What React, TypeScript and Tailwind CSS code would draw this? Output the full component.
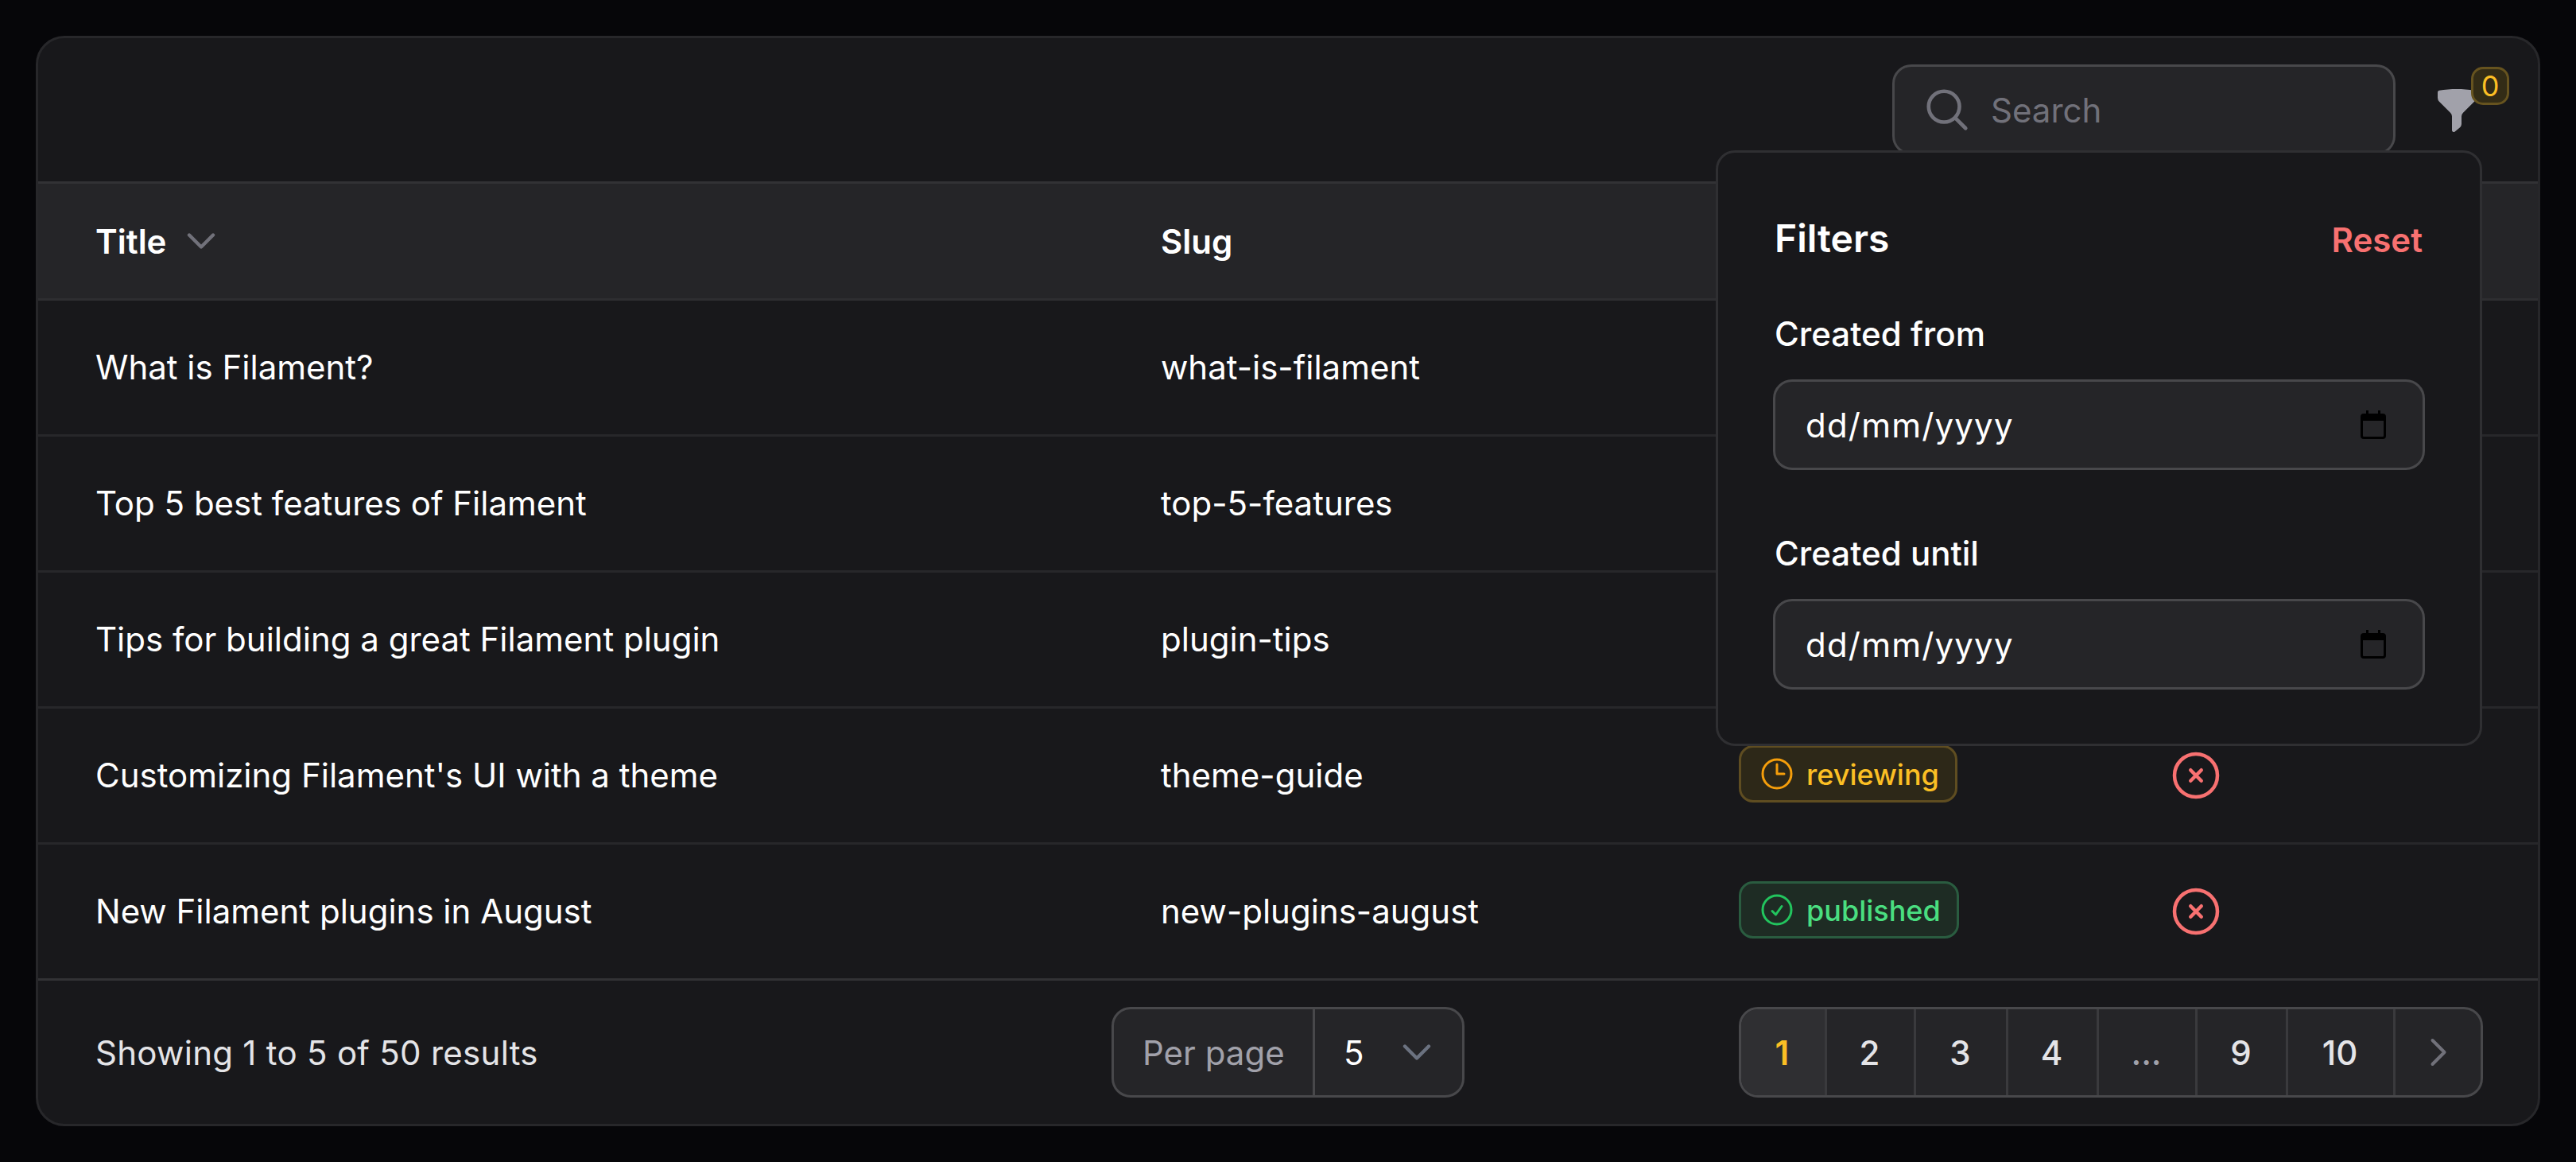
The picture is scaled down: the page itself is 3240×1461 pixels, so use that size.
import { ReactNode } from 'react';

const rows = [
  { title: 'What is Filament?', slug: 'what-is-filament' },
  { title: 'Top 5 best features of Filament', slug: 'top-5-features' },
  { title: 'Tips for building a great Filament plugin', slug: 'plugin-tips' },
  { title: "Customizing Filament's UI with a theme", slug: 'theme-guide', status: 'reviewing' },
  { title: 'New Filament plugins in August', slug: 'new-plugins-august', status: 'published' },
];

const pages = [
  { label: '1', w: 'w-[108px]', cls: 'bg-[#2f2f32] text-[#fbbf24] font-semibold' },
  { label: '2', w: 'w-[112px]', cls: 'text-[#e4e4e7] font-medium' },
  { label: '3', w: 'w-[116px]', cls: 'text-[#e4e4e7] font-medium' },
  { label: '4', w: 'w-[114px]', cls: 'text-[#e4e4e7] font-medium' },
  { label: '...', w: 'w-[124px]', cls: 'text-[#a1a1aa] font-medium' },
  { label: '9', w: 'w-[114px]', cls: 'text-[#e4e4e7] font-medium' },
  { label: '10', w: 'w-[135px]', cls: 'text-[#e4e4e7] font-medium' },
];

function Stroke({ d, size, width, className }: { d: string; size: number; width: number; className?: string }) {
  return (
    <svg width={size} height={size} viewBox="0 0 24 24" fill="none" stroke="currentColor" strokeWidth={width} strokeLinecap="round" strokeLinejoin="round" className={className}>
      <path d={d} />
    </svg>
  );
}

function Badge({ status }: { status: string }) {
  const reviewing = status === 'reviewing';
  return (
    <span className={`inline-flex h-[72px] items-center gap-[13px] rounded-[18px] border-[3px] pl-[21px] pr-[20px] text-[36px] font-medium ${reviewing ? 'border-[#5f4d21] bg-[#2d2818] text-[#fbbf24]' : 'border-[#2a5c40] bg-[#1e2c24] text-[#4ade80]'}`}>
      {reviewing ? (
        <Stroke size={48} width={1.5} className="text-[#f59e0b]" d="M12 6v6h4.5m4.5 0a9 9 0 1 1-18 0 9 9 0 0 1 18 0Z" />
      ) : (
        <Stroke size={48} width={1.5} className="text-[#22c55e]" d="M9 12.75 11.25 15 15 9.75M21 12a9 9 0 1 1-18 0 9 9 0 0 1 18 0Z" />
      )}
      <span className="pt-[2px]">{status}</span>
    </span>
  );
}

function DateField({ label, className }: { label: string; className?: string }) {
  return (
    <div className={className}>
      <div className="mb-[27px] pl-[2px] pt-[1px] text-[42px] leading-[60px] font-medium text-white">{label}</div>
      <div className="flex h-[114px] items-center justify-between rounded-[24px] border-[3px] border-[#48484b] bg-[#252528] pl-[38px] pr-[46px] text-[42px] tracking-[1.2px] text-white">
        <span>dd/mm/yyyy</span>
        <svg width="32" height="36" viewBox="0 0 32 36" className="text-black" fill="currentColor">
          <path d="M7 0h3v4h12V0h3v4h3a4 4 0 0 1 4 4v24a4 4 0 0 1-4 4H4a4 4 0 0 1-4-4V8a4 4 0 0 1 4-4h3V0Zm-4 13v19a1 1 0 0 0 1 1h24a1 1 0 0 0 1-1V13H3Z" />
        </svg>
      </div>
    </div>
  );
}

function Row({ children, border = true }: { children: ReactNode; border?: boolean }) {
  return (
    <div className={`grid grid-cols-[1340px_728px_572px_1fr] items-center text-[42px] text-white ${border ? 'h-[171px] border-b-[3px] border-[#27272a]' : 'h-[168px]'}`}>
      {children}
    </div>
  );
}

export default function App() {
  return (
    <div className="min-h-[1461px] bg-[#060609] p-[45px] font-['Inter',sans-serif]">
      <div className="relative h-[1371px] overflow-hidden rounded-[36px] border-[3px] border-[#27272a] bg-[#18181b]">
        {/* toolbar */}
        <div className="flex h-[183px] items-start justify-end border-b-[3px] border-[#323235] pr-[72px] pt-[33px]">
          <div className="flex h-[114px] w-[633px] items-center gap-[24px] rounded-[24px] border-[3px] border-[#48484b] bg-[#252528] pl-[35px] text-[42px] text-[#71717a]">
            <Stroke size={62} width={1.8} d="m21 21-5.197-5.197m0 0A7.5 7.5 0 1 0 5.196 5.196a7.5 7.5 0 0 0 10.607 10.607Z" />
            <span>Search</span>
          </div>
          <div className="relative ml-[47px] mt-[28px] h-[60px] w-[60px] text-[#a1a1aa]">
            <svg width="60" height="60" viewBox="0 0 20 20" fill="currentColor">
              <path d="M2.628 1.601C5.028 1.206 7.49 1 10 1s4.973.206 7.372.601a.75.75 0 0 1 .628.74v2.288a2.25 2.25 0 0 1-.659 1.59l-4.682 4.683a2.25 2.25 0 0 0-.659 1.59v3.037c0 .684-.31 1.33-.844 1.757l-1.937 1.55A.75.75 0 0 1 8 18.25v-5.757a2.25 2.25 0 0 0-.659-1.591L2.659 6.22A2.25 2.25 0 0 1 2 4.629V2.34a.75.75 0 0 1 .628-.74Z" />
            </svg>
            <span className="absolute left-[48px] top-[-25px] flex h-[48px] w-[48px] items-center justify-center rounded-[15px] border-[3px] border-[#66531f] bg-[#332c16] text-[36px] text-[#fbbf24]">0</span>
          </div>
        </div>

        {/* header */}
        <div className="grid h-[147px] grid-cols-[1340px_728px_572px_1fr] items-center border-b-[3px] border-[#2e2e31] bg-[#252528] text-[42px] font-semibold text-white">
          <div className="flex items-center gap-[20px] pl-[72px]">
            Title
            <Stroke size={48} width={2.2} className="text-[#71717a]" d="m19.5 8.25-7.5 7.5-7.5-7.5" />
          </div>
          <div className="pl-[72px]">Slug</div>
        </div>

        {rows.map((row, i) => (
          <Row key={row.slug} border={i < rows.length - 1}>
            <div className="pb-[2px] pl-[72px]">{row.title}</div>
            <div className="pb-[2px] pl-[72px]">{row.slug}</div>
            <div className="pl-[71px]">{row.status && <Badge status={row.status} />}</div>
            <div className="pl-[38px] text-[#f87171]">
              {row.status && <Stroke size={72} width={1.5} d="m9.75 9.75 4.5 4.5m0-4.5-4.5 4.5M21 12a9 9 0 1 1-18 0 9 9 0 0 1 18 0Z" />}
            </div>
          </Row>
        ))}

        {/* footer */}
        <div className="grid h-[183px] grid-cols-[1fr_auto_1fr] items-center border-t-[3px] border-[#323235] px-[72px] text-[42px] text-[#e4e4e7]">
          <div className="tracking-[0.28px]">Showing 1 to 5 of 50 results</div>
          <div className="flex h-[114px] w-[444px] items-center rounded-[24px] border-[3px] border-[#48484b] bg-[#252528]">
            <div className="flex h-full w-[253px] items-center border-r-[3px] border-[#48484b] pl-[36px] text-[#a1a1aa]">Per page</div>
            <div className="flex flex-1 items-center justify-between pl-[36px] pr-[33px] text-white">
              <span>5</span>
              <Stroke size={48} width={2.2} className="text-[#6b7280]" d="m19.5 8.25-7.5 7.5-7.5-7.5" />
            </div>
          </div>
          <div className="-mr-[3px] flex justify-end">
            <div className="flex h-[114px] items-stretch overflow-hidden rounded-[24px] border-[3px] border-[#48484b] bg-[#252528]">
              {pages.map((p) => (
                <div key={p.label} className={`flex items-center justify-center border-r-[3px] border-[#3a3a3d] pr-[2px] ${p.w} ${p.cls}`}>{p.label}</div>
              ))}
              <div className="flex w-[107px] items-center justify-center text-[#71717a]">
                <Stroke size={48} width={2} d="m8.25 4.5 7.5 7.5-7.5 7.5" />
              </div>
            </div>
          </div>
        </div>

        {/* filters popover */}
        <div className="absolute left-[2110px] top-[141px] h-[749px] w-[964px] rounded-[24px] border-[3px] border-[#2f2f32] bg-[#18181b] px-[69px] pt-[72px]">
          <div className="mb-[53px] flex h-[72px] items-center justify-between pl-[2px] pr-[3px]">
            <span className="text-[48px] font-semibold text-white">Filters</span>
            <span className="pt-[2px] text-[42px] font-semibold text-[#f87171]">Reset</span>
          </div>
          <DateField label="Created from" />
          <DateField label="Created until" className="mt-[74px]" />
        </div>
      </div>
    </div>
  );
}
